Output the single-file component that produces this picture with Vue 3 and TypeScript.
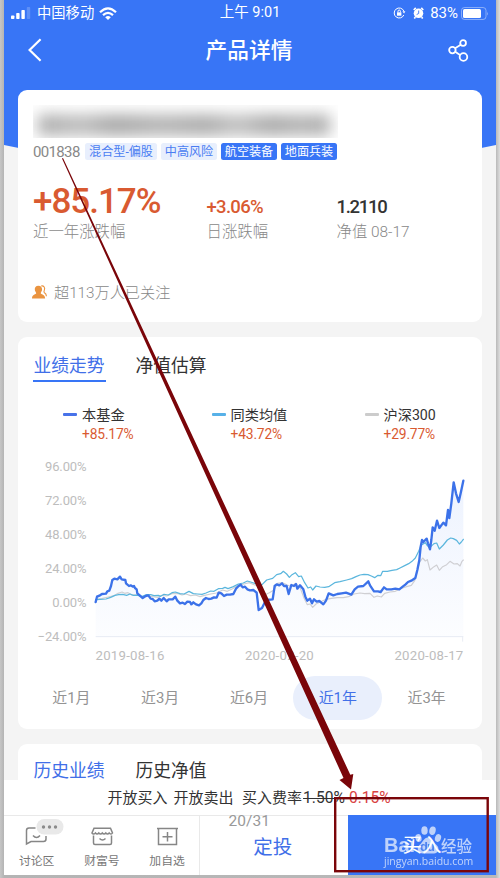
<script setup lang="ts">
interface Tag { text: string; solid: boolean }
interface Legend { name: string; value: string; tone: string }

const tags: Tag[] = [
  { text: '混合型-偏股', solid: false },
  { text: '中高风险', solid: false },
  { text: '航空装备', solid: true },
  { text: '地面兵装', solid: true },
]
const legends: Legend[] = [
  { name: '本基金', value: '+85.17%', tone: 'fund' },
  { name: '同类均值', value: '+43.72%', tone: 'peer' },
  { name: '沪深300', value: '+29.77%', tone: 'index' },
]
const ticks: string[] = ['96.00%', '72.00%', '48.00%', '24.00%', '0.00%', '−24.00%']
const dates: string[] = ['2019-08-16', '2020-02-20', '2020-08-17']
const ranges: string[] = ['近1月', '近3月', '近6月', '近1年', '近3年']
const activeRange = '近1年'

const fundLine =
  '287,456 291,440 300,436 306,432 318,431 322,424 328,422 333,408 337,390 343,386 352,388 360,380 365,388 376,390 378,400 387,408 392,406 399,410 402,408 405,414 410,418 412,430 428,444 437,438 445,436 452,446 458,447 464,454 472,452 478,446 484,452 491,444 500,454 506,448 518,448 526,440 532,452 540,460 548,458 555,462 562,455 570,456 574,463 580,457 588,463 597,466 604,460 610,450 618,444 626,447 634,446 642,442 650,443 656,428 664,430 672,438 680,434 690,434 700,432 708,416 716,408 722,404 728,412 735,410 742,418 750,421 760,420 770,428 772,445 776,480 786,474 798,450 818,448 824,408 830,403 838,406 846,400 852,408 860,408 866,432 874,405 882,408 888,402 892,416 900,406 910,418 916,440 922,452 930,446 936,460 942,448 950,455 958,453 970,463 978,452 986,430 1000,436 1012,432 1025,430 1038,428 1054,434 1064,418 1074,410 1090,408 1105,394 1110,406 1122,424 1134,424 1142,426 1152,412 1160,418 1174,418 1186,416 1198,418 1208,410 1216,404 1224,396 1234,392 1246,384 1252,360 1258,330 1262,290 1266,270 1270,276 1280,266 1284,280 1290,298 1294,270 1298,232 1304,242 1311,212 1318,234 1330,218 1338,226 1344,180 1348,204 1354,160 1361,97 1368,130 1376,156 1382,130 1390,92'
const peerLine =
  '287,449 300,448 318,447 332,442 345,436 356,434 368,433 380,436 390,432 400,436 415,436 425,440 440,434 452,434 462,437 475,436 482,439 492,433 505,435 516,428 526,426 540,431 552,432 567,424 580,431 592,432 606,433 618,429 632,423 642,424 655,416 668,415 675,412 684,416 700,410 715,402 730,399 742,393 752,396 770,402 786,404 800,390 818,385 830,374 842,371 850,364 860,372 868,382 876,374 886,368 896,380 904,378 914,398 924,414 932,411 938,420 948,408 960,411 974,412 986,410 1004,398 1020,395 1040,390 1055,386 1068,380 1080,375 1092,373 1104,374 1114,378 1124,383 1134,376 1142,377 1148,364 1162,364 1176,361 1190,359 1200,354 1214,347 1226,341 1236,334 1246,324 1256,304 1264,285 1276,278 1282,287 1290,292 1302,281 1310,279 1318,297 1330,285 1342,270 1352,264 1360,266 1370,271 1378,282 1384,276 1390,268'
const indexLine =
  '287,449 305,446 325,441 342,437 354,430 366,426 374,430 384,428 396,435 412,434 426,441 442,437 458,440 474,442 486,436 500,438 516,431 532,430 546,435 558,432 572,437 586,435 600,440 614,436 632,432 650,429 668,420 682,424 698,416 714,406 732,402 748,398 764,405 778,408 792,436 808,428 822,420 832,400 848,398 862,405 874,410 886,400 900,412 912,444 922,464 930,462 938,472 948,462 962,455 978,448 994,445 1012,443 1030,443 1046,440 1062,432 1080,429 1094,431 1110,430 1122,442 1132,438 1144,441 1154,430 1170,426 1186,424 1198,418 1208,414 1220,410 1234,406 1244,392 1250,370 1258,338 1268,324 1276,333 1282,329 1290,360 1302,350 1310,345 1318,361 1328,350 1340,344 1350,334 1362,342 1372,341 1380,348 1386,334 1390,330'
const fundArea = `${fundLine} 1390,560 287,560`
</script>

<template>
  <main class="frame">
    <div class="phone">
      <section class="scroll">
        <div class="status">
          <div class="status-left">
            <svg class="signal" viewBox="0 0 20 12">
              <rect x="0" y="8.5" width="3.4" height="3.5" rx=".8" />
              <rect x="5.2" y="6" width="3.4" height="6" rx=".8" />
              <rect x="10.4" y="3" width="3.4" height="9" rx=".8" />
              <rect class="dim" x="15.8" y="0" width="3.4" height="12" rx=".8" />
            </svg>
            <span>中国移动</span>
            <svg class="wifi" viewBox="0 0 18 13">
              <path d="M1 5.2Q9-2.6 17 5.2M4 8.1q5-4.5 10 0" />
              <path class="dot" d="M6.2 10.2q2.8-2.3 5.6 0L9 13z" />
            </svg>
          </div>
          <span class="clock">上午 9:01</span>
          <div class="status-right">
            <svg class="lock" viewBox="0 0 13 12">
              <path d="M10.8 4A5 5 0 1 0 10.8 8" />
              <path d="M9.4 4.2h3l-1.3 2.4z" class="fill" />
              <path d="M4 5.3h4.4v3.4H4z" class="fill" />
              <path d="M5 5.3V4.2a1.2 1.2 0 0 1 2.4 0v1.1" />
            </svg>
            <svg class="alarm" viewBox="0 0 12 13">
              <circle cx="6" cy="6.8" r="5.2" />
              <path d="M.8 3.2 3 .9M11.2 3.2 9 .9M2.6 11l-1.2 1.5M9.4 11l1.2 1.5" class="ear" />
              <path d="M6.2 3.8V7L4 8.2" class="hand" />
            </svg>
            <span>83%</span>
            <svg class="battery" viewBox="0 0 28 13">
              <rect x=".5" y=".5" width="24.5" height="12" rx="3" class="shell" />
              <rect x="2" y="2" width="18" height="9" rx="1.5" class="level" />
              <path d="M26 4.4q1.8 2.1 0 4.2z" class="tip" />
            </svg>
          </div>
        </div>

        <header class="nav">
          <svg class="back" viewBox="0 0 14 24"><path d="M12.6 1.2 1.6 12l11 10.8" /></svg>
          <h1>产品详情</h1>
          <svg class="share" viewBox="0 0 22 24">
            <circle cx="4.6" cy="11.6" r="3.4" />
            <circle cx="15.8" cy="4.2" r="3" />
            <circle cx="16.2" cy="18.8" r="4" />
            <path d="M7.4 9.6 13.4 6M7.6 13.2l5 3.4" />
          </svg>
        </header>

        <div class="cards">
          <section class="card summary">
            <div class="masked"><i></i></div>
            <div class="tags">
              <span class="code">001838</span>
              <span v-for="t in tags" :key="t.text" class="tag" :class="{ solid: t.solid }">{{ t.text }}</span>
            </div>
            <div class="figures">
              <div class="fig year"><b>+85.17%</b><small>近一年涨跌幅</small></div>
              <div class="fig day"><b>+3.06%</b><small>日涨跌幅</small></div>
              <div class="fig net"><b>1.2110</b><small>净值 08-17</small></div>
            </div>
            <div class="followers">
              <svg viewBox="0 0 16 15">
                <path d="M9.8.8c2.9-.6 4.5 2 3.3 4.7-.7 1.6-.6 2 .2 2.5 1.4.8 2 1.7 2.1 3.8" class="behind" />
                <path d="M6.8.6C9.6.6 11 2.5 10.7 5c-.2 1.5-1.4 2.6-1.4 3.6 0 1.2 4.7 1 4.7 5.6H0c0-4.6 4.5-4.4 4.500-5.6 0-1-1.3-2.1-1.500-3.6C2.700 2.500 4 .6 6.800.6z" />
              </svg>
              <span>超113万人已关注</span>
            </div>
          </section>

          <section class="card trend">
            <div class="tabs"><span class="on">业绩走势</span><span>净值估算</span></div>
            <div class="legends">
              <div v-for="l in legends" :key="l.name" class="legend" :class="l.tone">
                <i></i>
                <div><span>{{ l.name }}</span><em>{{ l.value }}</em></div>
              </div>
            </div>
            <div class="chart">
              <div class="axis"><span v-for="t in ticks" :key="t">{{ t }}</span></div>
              <svg class="plot" viewBox="285 30 1110 555">
                <defs>
                  <linearGradient id="shade" x1="0" y1="0" x2="0" y2="1">
                    <stop offset="0" stop-color="#3875f6" stop-opacity=".09" />
                    <stop offset="1" stop-color="#3875f6" stop-opacity=".015" />
                  </linearGradient>
                </defs>
                <path d="M287 560H1390M1388 560v15" class="base" />
                <polygon :points="fundArea" fill="url(#shade)" />
                <polyline :points="indexLine" class="index-line" />
                <polyline :points="peerLine" class="peer-line" />
                <polyline :points="fundLine" class="fund-line" />
              </svg>
            </div>
            <div class="dates"><span v-for="d in dates" :key="d">{{ d }}</span></div>
            <div class="ranges">
              <span v-for="r in ranges" :key="r" :class="{ on: r === activeRange }">{{ r }}</span>
            </div>
          </section>

          <section class="card history">
            <div class="tabs"><span class="on">历史业绩</span><span>历史净值</span></div>
          </section>
        </div>
      </section>

      <footer class="footer">
        <p class="fee"><span>开放买入</span><span>开放卖出</span><span class="rate">买入费率</span><s>1.50%</s><s class="now">0.15%</s></p>
        <div class="actions">
          <div class="item">
            <svg viewBox="0 0 38 28">
              <path d="M10 10H3.500Q1 10 1 12.500V26l4.500-2.500H18Q20.500 23.500 20.500 21v-3M7.500 17.500q3.500 4 7 0" />
              <rect x="11" y="1" width="27" height="15.500" rx="7.750" class="bubble" />
              <g class="dots"><circle cx="18" cy="9" r="1.700" /><circle cx="24" cy="9" r="1.700" /><circle cx="30" cy="9" r="1.700" /></g>
            </svg>
            <span>讨论区</span>
          </div>
          <div class="item">
            <svg viewBox="0 0 38 28">
              <path d="M11 10.200h16.500l2 4.800q-1.200 2.200-3.300 0-1.700 2.200-3.400 0-1.700 2.200-3.500 0-1.700 2.200-3.500 0-1.700 2.200-3.400 0-2 2.200-3.400 0zM10.500 17.500V25Q10.500 26.500 12 26.500h15Q28.500 26.500 28.500 25v-7.500M16.500 20.500q3 3 6 0" />
            </svg>
            <span>财富号</span>
          </div>
          <div class="item">
            <svg viewBox="0 0 38 28">
              <path d="M9 10.500h21M10.500 10.500V26.500H28.500V10.500M19.500 14v9.500M14.500 18.700h10" />
            </svg>
            <span>加自选</span>
          </div>
          <div class="invest"><small>20/31</small><strong>定投</strong></div>
          <div class="buy">
            <div class="mark">
              <svg viewBox="0 0 90 31">
                <g class="paw">
                  <ellipse cx="34.500" cy="14" rx="3" ry="4" transform="rotate(-15 34.500 14)" />
                  <ellipse cx="40.500" cy="6.500" rx="3.200" ry="4.300" />
                  <ellipse cx="48.500" cy="6.700" rx="3.200" ry="4.300" transform="rotate(12 48.500 6.700)" />
                  <ellipse cx="54" cy="14" rx="3" ry="4" transform="rotate(18 54 14)" />
                  <path d="M44 13.500c4 0 5.500 5 8.500 7.500 3.500 3 2 8.500-2.500 8.500-4 0-8 0-11 0-5 0-7-5.500-3.500-8.500 3-2.500 4.500-7.500 8.500-7.500z" />
                </g>
                <text x="0" y="28" class="brand" textLength="31">Bai</text>
                <text x="36" y="27" class="du" textLength="15">du</text>
                <text x="57" y="28" class="brand cn" textLength="31">经验</text>
              </svg>
              <span>jingyan.baidu.com</span>
            </div>
            <strong>买入</strong>
          </div>
        </div>
      </footer>
    </div>

    <svg class="annotation" viewBox="0 0 500 878">
      <polygon points="62,158.500 63,158 350.300,774.700 353.300,774 351,789.500 339.500,780 343.500,778" />
      <rect x="335.200" y="798.200" width="152.500" height="73" />
    </svg>
  </main>
</template>

<style>
body { margin: 0; }
</style>

<style scoped>
.frame {
  position: relative;
  box-sizing: border-box;
  width: 500px;
  height: 878px;
  padding: 0 4px 3px;
  overflow: hidden;
  background: linear-gradient(90deg, #c6c6c6 0, #b4b4b4 4px, #b9b9b9 496px, #dedede 500px);
  font-family: Roboto, "Noto Sans CJK SC", sans-serif;
  color: #333;
}
.phone { display: flex; flex-direction: column; width: 492px; height: 875px; background: #f4f4f4; }
.scroll { position: relative; height: 780px; overflow: hidden; isolation: isolate; }
.scroll::before {
  content: "";
  position: absolute;
  inset: 0 0 auto;
  z-index: -1;
  height: 170px;
  background: #3875f6;
  clip-path: polygon(0 0, 100% 0, 100% 145px, 97% 148px, 50% 170px, 3% 148px, 0 145px);
}
svg { display: block; overflow: visible; }

.status { display: grid; grid-template-columns: 1fr auto 1fr; align-items: center; height: 25px; padding: 0 7px; color: #fff; font-size: 14.5px; line-height: 26px; }
.status-left, .status-right { display: flex; align-items: center; }
.status-right { justify-content: flex-end; }
.signal { width: 20px; height: 12px; margin-right: 6px; fill: #fff; }
.signal .dim { opacity: .2; }
.wifi { width: 18px; height: 13px; margin-left: 5px; fill: none; stroke: #fff; stroke-width: 2.2; }
.wifi .dot { fill: #fff; stroke: none; }
.status-left span { font-size: 14.3px; }
.lock { width: 13px; height: 12px; margin-right: 7px; fill: none; stroke: #fff; }
.lock .fill { fill: #fff; stroke: none; }
.alarm { width: 11px; height: 12px; margin-right: 6px; fill: #fff; }
.alarm .ear { stroke: #fff; stroke-width: 1.8; }
.alarm .hand { fill: none; stroke: #3875f6; }
.status-right span { font-size: 15px; }
.battery { width: 28px; height: 13px; margin-left: 3px; }
.battery .shell { fill: none; stroke: #fff; opacity: .4; }
.battery .level { fill: #fff; }
.battery .tip { fill: #fff; opacity: .4; }

.nav { display: flex; align-items: center; justify-content: space-between; height: 50px; padding: 0 27px 0 24px; color: #fff; }
.nav h1 { margin: 2px 0 0 8px; font-size: 21.7px; font-weight: 500; line-height: 50px; }
.back { width: 14px; height: 24px; fill: none; stroke: #fff; stroke-width: 2.2; }
.share { width: 21px; height: 23px; fill: none; stroke: #fff; stroke-width: 1.9; }

.cards { display: flex; flex-direction: column; gap: 15px; padding: 15px 14.5px 0 14px; }
.card { box-sizing: border-box; border-radius: 9px; background: #fff; }
.summary { height: 232px; padding: 15px 14px 0 15px; }
.masked { width: 305px; height: 33px; overflow: hidden; }
.masked i { display: block; width: 292px; height: 20px; margin: 10px 0 0 5px; background: linear-gradient(90deg, #a6a6a6, #bababa 15%, #a2a2a2 26%, #b0b0b0 42%, #a6a6a6 58%, #bebebe 68%, #a4a4a4 80%, #b0b0b0 90%, #a6a6a6); filter: blur(8px); }
.tags { display: flex; align-items: center; gap: 4px; height: 18px; margin-top: 4.5px; }
.code { width: 48px; font-size: 15px; letter-spacing: -.65px; color: #888; }
.tag { box-sizing: border-box; width: 56px; height: 17.5px; padding-top: 1px; border-radius: 2.5px; background: #e8effd; color: #4a7df2; font-size: 12.1px; line-height: 17px; text-align: center; white-space: nowrap; }
.tag:nth-child(2) { width: 72px; }
.tag.solid { background: #3875f6; color: #fff; }
.figures { display: flex; height: 76px; margin-top: 5.5px; }
.fig { display: flex; flex-direction: column; justify-content: flex-end; }
.fig.year { width: 173.5px; }
.fig.day { width: 130px; }
.fig b { font-size: 18.5px; font-weight: 500; line-height: 20px; color: #d95a31; letter-spacing: -.7px; white-space: nowrap; }
.fig.year b { font-size: 35px; line-height: 34px; letter-spacing: -1px; }
.fig.year b + small { margin-top: 3px; }
.fig.net b { color: #333; letter-spacing: -1.3px; font-size: 18.5px; }
.fig small { margin-top: 5px; font-size: 15.4px; font-weight: 300; line-height: 20px; color: #888; white-space: nowrap; }
.followers { display: flex; align-items: center; gap: 7px; margin: 40.5px 0 0 -1px; font-size: 15.2px; line-height: 20px; font-weight: 300; color: #888; }
.followers svg { width: 15px; height: 14.5px; fill: #ea9440; }
.followers .behind { fill: none; stroke: #ea9440; stroke-width: 1.2; }

.trend { height: 392px; padding: 0 16px 0 15px; }
.tabs { display: flex; gap: 29px; height: 45px; font-size: 17.8px; line-height: 57px; }
.tabs span { box-sizing: border-box; width: 73px; height: 45px; padding-left: .5px; white-space: nowrap; }
.tabs .on { color: #416fe8; }
.trend .tabs .on { border-bottom: 2.5px solid #3875f6; }
.legends { display: flex; margin-top: 24px; padding-left: 30px; height: 40px; }
.legend { display: flex; width: 148.5px; gap: 5px; }
.legend.peer { width: 153px; }
.legend.index { width: 80px; }
.legend i { width: 14px; height: 2.5px; margin-top: 7px; border-radius: 1px; background: #4772e9; }
.legend.peer i { background: #57b1e8; }
.legend.index i { background: #ccc; }
.legend div { display: flex; flex-direction: column; }
.legend span { font-size: 14.2px; line-height: 19px; white-space: nowrap; }
.legend em { font-size: 13.8px; font-style: normal; line-height: 19px; color: #d95a31; letter-spacing: -.15px; }
.chart { display: flex; height: 185px; margin-top: 14px; }
.axis { display: flex; flex-direction: column; justify-content: space-between; box-sizing: border-box; width: 53.5px; height: 185px; margin-top: -.5px; text-align: right; font-size: 13px; line-height: 14px; letter-spacing: -.1px; color: #bdbdbd; }
.plot { width: 370px; height: 185px; margin-left: 8.5px; }
.plot .base { fill: none; stroke: #e9edf4; stroke-width: 3; }
.plot polyline { fill: none; stroke-linejoin: round; stroke-linecap: round; }
.index-line { stroke: #cfcfd3; stroke-width: 3.5; }
.peer-line { stroke: #5bb6dd; stroke-width: 3.7; }
.fund-line { stroke: #3c72e9; stroke-width: 7; }
.dates { display: flex; justify-content: space-between; padding: 0 2px 0 62.5px; margin-top: 2px; font-size: 13.2px; line-height: 18px; letter-spacing: .25px; color: #bdbdbd; }
.ranges { display: flex; justify-content: space-between; height: 44px; margin: 11px -5.5px 0 -6px; font-size: 14.9px; line-height: 45px; text-align: center; color: #939393; }
.ranges span { width: 89px; border-radius: 22px; }
.ranges .on { background: #e9effc; color: #416fe8; }
.history { height: 120px; padding: 0 15px; }
.history .tabs { line-height: 54px; }

.footer { height: 95px; background: #fff; }
.fee { display: flex; box-sizing: border-box; height: 35px; margin: 0; padding-left: 103.5px; font-size: 15px; line-height: 37px; white-space: nowrap; }
.fee span { margin-right: 6px; }
.fee .rate { margin: 0 0 0 2.5px; }
.fee s { margin-left: 1px; font-size: 15.6px; }
.fee .now { margin-left: 4px; color: #d94343; }
.actions { display: grid; grid-template-columns: 65.3px 65.3px 64.9px 148.5px 148px; box-sizing: border-box; height: 60px; border-top: 1px solid #e9e9e9; }
.item { display: flex; flex-direction: column; align-items: center; color: #777; font-size: 11.8px; line-height: 16px; }
.item svg { width: 38px; height: 28px; margin: 2px 0 7px; fill: none; stroke: #868686; stroke-width: 1.5; }
.item:first-child svg { transform: translateX(7.5px); }
.item .bubble { fill: #e9e9e9; stroke: none; }
.item .dots { fill: #8b8b8b; stroke: none; }
.invest { display: flex; flex-direction: column; align-items: center; padding-right: 3px; border-left: 1px solid #e9e9e9; color: #416fe8; }
.invest small { margin: -4px 47px 0 0; font-size: 15.5px; line-height: 19px; color: #999; }
.invest strong, .buy strong { font-size: 19.5px; font-weight: 400; line-height: 33px; }
.buy { position: relative; display: flex; justify-content: center; margin-top: -1px; background: #3875f6; color: #fff; }
.buy strong { position: relative; margin-top: 15px; line-height: 31px; }
.mark { position: absolute; left: 36px; top: 8.5px; width: 90px; color: #d7e3fc; font-family: "Open Sans", sans-serif; font-size: 10.5px; line-height: 13px; opacity: .85; }
.mark svg { width: 90px; height: 31px; fill: #d7e3fc; }
.mark .brand { font: 700 20px "Liberation Sans", sans-serif; }
.mark .cn { font: 500 15.5px "Noto Sans CJK SC", sans-serif; }
.mark .du { font: 700 13px "Liberation Sans", sans-serif; fill: #5486ee; }
.annotation { position: absolute; inset: 0; width: 500px; height: 878px; pointer-events: none; }
.annotation polygon { fill: #7a0509; }
.annotation rect { fill: none; stroke: #7a0509; stroke-width: 2.4; }
</style>
